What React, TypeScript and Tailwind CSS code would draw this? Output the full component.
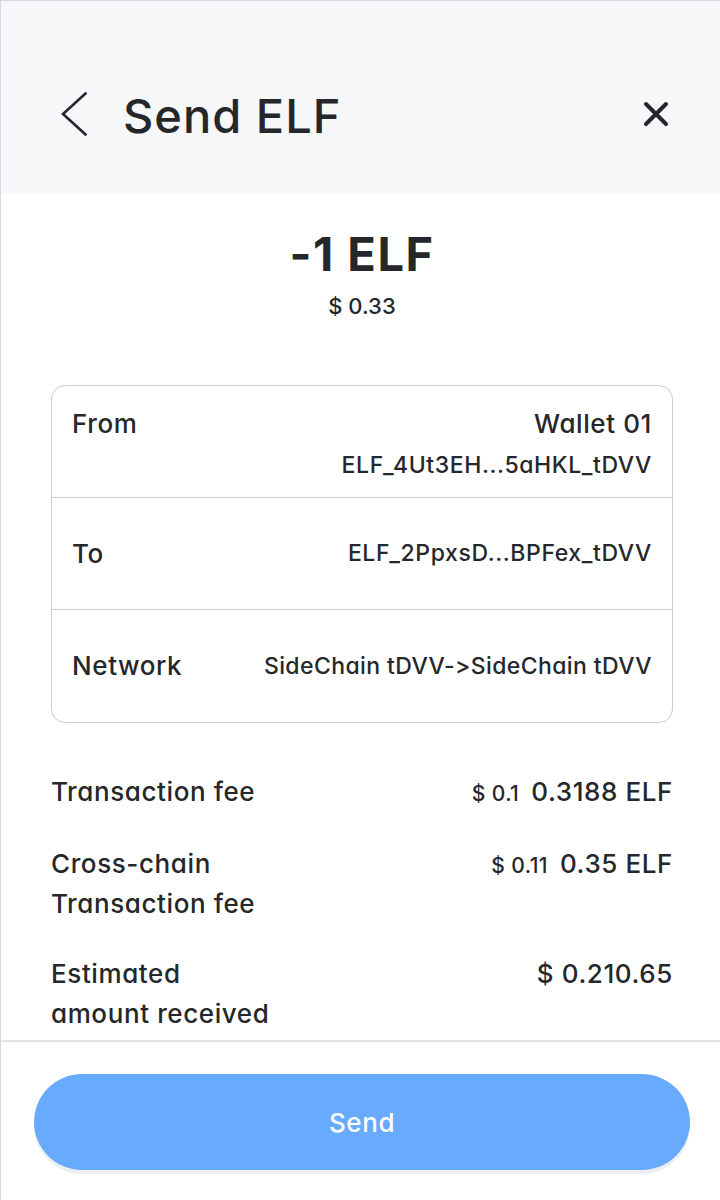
import type { ReactNode } from "react";

function Row({ label, children, top, last }: { label: string; children: ReactNode; top?: boolean; last?: boolean }) {
  return (
    <div
      className={`flex h-[112px] justify-between px-5 ${top ? "items-start pt-[22px]" : "items-center"} ${
        last ? "" : "border-b border-[#c8ccd6]"
      }`}
    >
      <span className="text-[26px] font-medium leading-[32px] tracking-[0.6px]">{label}</span>
      <div className="flex flex-col items-end">{children}</div>
    </div>
  );
}

function Fee({ label, usd, amount }: { label: ReactNode; usd?: string; amount: string }) {
  return (
    <div className="flex items-start justify-between">
      <span className="text-[26px] font-medium leading-[40px] tracking-[0.6px]">{label}</span>
      <div className="flex items-baseline gap-[12px] leading-[40px]">
        {usd && <span className="text-[21px] font-medium tracking-[0.4px]">{usd}</span>}
        <span className="text-[26px] font-medium tracking-[0.6px]">{amount}</span>
      </div>
    </div>
  );
}

export default function App() {
  return (
    <div className="flex h-[1200px] w-[720px] flex-col overflow-hidden border-l border-t border-[#d6d8dc] bg-white font-['Inter','Noto_Sans',sans-serif] text-[#25272a] [font-feature-settings:'calt'_0,'cv11'_1]">
      {/* header */}
      <header className="flex h-[193px] shrink-0 items-center justify-between bg-[#f6f7f9] pl-[60px] pr-[51px] pt-[32px]">
        <div className="flex items-center gap-[36px]">
          <svg width="26" height="44" viewBox="0 0 26 44" fill="none" stroke="#25272a" strokeWidth="2.6" strokeLinecap="square">
            <polyline points="24.5,1.5 2,22 24.5,42.5" />
          </svg>
          <h1 className="pt-[4px] text-[47px] font-medium leading-none tracking-[1px]">Send ELF</h1>
        </div>
        <svg width="26" height="26" viewBox="0 0 26 26" fill="none" stroke="#25272a" strokeWidth="4" strokeLinecap="round">
          <path d="M3 3L23 23M23 3L3 23" />
        </svg>
      </header>

      <main className="flex flex-1 flex-col pl-[50px] pr-[47px]">
        {/* amount */}
        <div className="mt-[32px] flex flex-col items-center">
          <div className="text-[47px] font-bold leading-[56px] tracking-[1.5px]">-1 ELF</div>
          <div className="mt-[10px] text-[22px] font-medium leading-[28px]">$ 0.33</div>
        </div>

        {/* details card */}
        <div className="mt-[65px] rounded-[14px] border border-[#c8ccd6]">
          <Row label="From" top>
            <span className="text-[26px] font-medium leading-[32px] tracking-[0.6px]">Wallet 01</span>
            <span className="mt-[11px] text-[23px] font-medium leading-[28px] tracking-[0.6px]">ELF_4Ut3EH...5aHKL_tDVV</span>
          </Row>
          <Row label="To">
            <span className="text-[23px] font-medium tracking-[0.6px]">ELF_2PpxsD...BPFex_tDVV</span>
          </Row>
          <Row label="Network" last>
            <span className="text-[23px] font-medium tracking-[0.4px]">SideChain tDVV-&gt;SideChain tDVV</span>
          </Row>
        </div>

        {/* fees */}
        <div className="mt-[49px] flex flex-col gap-[30px]">
          <Fee label="Transaction fee" usd="$ 0.1" amount="0.3188 ELF" />
          <Fee
            label={
              <>
                Cross-chain
                <br />
                Transaction fee
              </>
            }
            usd="$ 0.11"
            amount="0.35 ELF"
          />
          <Fee
            label={
              <>
                Estimated
                <br />
                amount received
              </>
            }
            amount="$ 0.210.65"
          />
        </div>
      </main>

      {/* footer */}
      <footer className="shrink-0 border-t-2 border-[#e2e4ea] pb-[30px] pl-[33px] pr-[30px] pt-[32px]">
        <button className="h-[96px] w-full rounded-full bg-[#68aafd] text-[26px] font-medium tracking-[0.6px] text-white shadow-[0_4px_0_#eceef2]">
          Send
        </button>
      </footer>
    </div>
  );
}
